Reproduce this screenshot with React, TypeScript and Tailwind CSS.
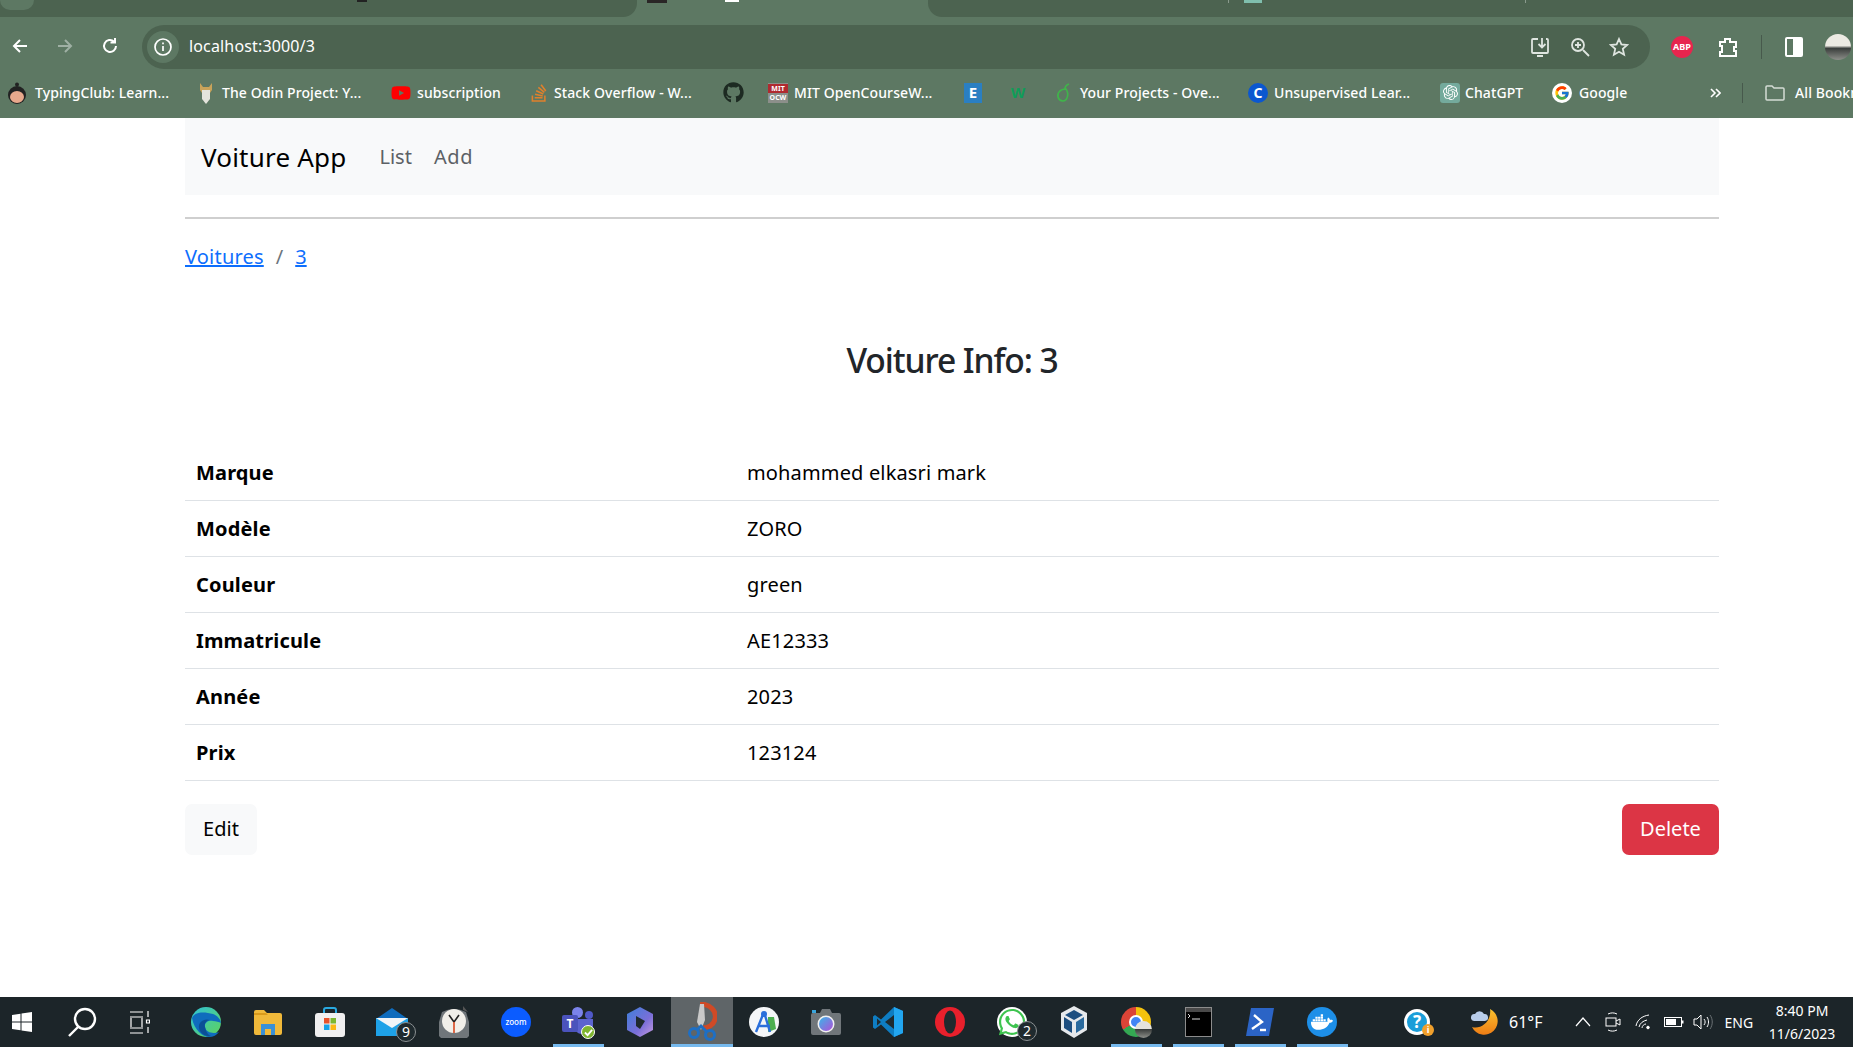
import { FaDocker, FaGithub, FaStackOverflow, FaWhatsapp, FaYoutube } from "react-icons/fa";
import { FcGoogle } from "react-icons/fc";
import { SiOpenai } from "react-icons/si";

const rows = [
  ["Marque", "mohammed elkasri mark"],
  ["Modèle", "ZORO"],
  ["Couleur", "green"],
  ["Immatricule", "AE12333"],
  ["Année", "2023"],
  ["Prix", "123124"],
];

function Bookmark({ width, icon, label, gap = "ml-[5px]" }: { width: string; icon: React.ReactNode; label?: string; gap?: string }) {
  return (
    <div className={`flex shrink-0 items-center ${width}`}>
      <span className="flex h-[22px] w-[22px] shrink-0 items-center justify-center">{icon}</span>
      {label && <span className={`${gap} whitespace-nowrap text-[14px] font-medium tracking-[0.1px] text-white`}>{label}</span>}
    </div>
  );
}

function Cell({ active, open, children }: { active?: boolean; open?: boolean; children: React.ReactNode }) {
  return (
    <div className={`relative flex h-[50px] w-[62px] shrink-0 items-center justify-center ${active ? "bg-[#5f6568]" : ""}`}>
      {children}
      {open && <div className="absolute bottom-0 left-[6px] right-[5px] h-[3px] bg-[#76b9ed]" />}
      {active && <div className="absolute bottom-0 left-0 right-0 h-[3px] bg-[#76b9ed]" />}
    </div>
  );
}

function Badge({ n }: { n: string }) {
  return (
    <span className="absolute left-[20px] top-[14px] flex h-[20px] w-[20px] items-center justify-center rounded-full border border-[#8b9092] bg-[#1f2a2e] text-[14px] leading-none text-white">
      {n}
    </span>
  );
}

function Edge() {
  return (
    <svg width="30" height="30" viewBox="0 0 30 30">
      <defs>
        <linearGradient id="edgeA" x1="0" y1="0" x2="1" y2="1">
          <stop offset="0" stopColor="#2fc2d8" />
          <stop offset="1" stopColor="#5fd35a" />
        </linearGradient>
      </defs>
      <circle cx="15" cy="15" r="15" fill="url(#edgeA)" />
      <path d="M1 11C3 23 12 30 18 30c4 0 8-2 10-5-5 2-13 1-14-5-1-4 3-7 8-6 3 0 6 1 8 2 0-3-3-7-8-9C14 5 4 4 1 11z" fill="#0f6cbd" />
      <path d="M14 20c-1-4 2-7 5-7-6-2-12 2-11 8 1 5 6 9 12 8-3-1-5-4-6-9z" fill="#0b4f96" />
    </svg>
  );
}

function Files() {
  return (
    <svg width="28" height="26" viewBox="0 0 28 26">
      <path d="M0 3a2 2 0 0 1 2-2h8l3 3h13a2 2 0 0 1 2 2v18a2 2 0 0 1-2 2H2a2 2 0 0 1-2-2z" fill="#f0b93a" />
      <path d="M0 4h12l2 2H0z" fill="#d99a1b" />
      <path d="M7 26V15h14v11h-4v-6h-6v6z" fill="#3a90d6" />
    </svg>
  );
}

function Store() {
  return (
    <svg width="30" height="30" viewBox="0 0 30 30">
      <path d="M9 7V3a2 2 0 0 1 2-2h8a2 2 0 0 1 2 2v4" fill="none" stroke="#29a9e0" strokeWidth="2" />
      <rect y="6" width="30" height="24" rx="3" fill="#f0f0f0" />
      <rect x="9" y="11" width="5.5" height="5.5" fill="#e8532b" />
      <rect x="15.5" y="11" width="5.5" height="5.5" fill="#7cb82f" />
      <rect x="9" y="17.5" width="5.5" height="5.5" fill="#17a2e8" />
      <rect x="15.5" y="17.5" width="5.5" height="5.5" fill="#fbb915" />
    </svg>
  );
}

function Mail() {
  return (
    <svg width="32" height="28" viewBox="0 0 32 28">
      <path d="M0 11 16 0l16 11z" fill="#0f6cbd" />
      <rect y="10" width="32" height="18" fill="#1ea2e8" />
      <path d="M0 10h32L16 20z" fill="#f1f5f8" />
    </svg>
  );
}

function Clock() {
  return (
    <svg width="30" height="32" viewBox="0 0 30 32">
      <path d="M24 0l5 6-5-2z" fill="#555" />
      <path d="M3 6a26 26 0 0 1 24 0l3 10v14l-2 2H2l-2-2V16z" fill="#70767a" />
      <circle cx="15" cy="15" r="12" fill="#f1efe9" />
      <path d="M15 16 10 9M15 16l5-7" stroke="#222" strokeWidth="1.6" />
      <path d="M15 16v11" stroke="#d9471f" strokeWidth="1.6" />
    </svg>
  );
}

function Teams() {
  return (
    <div className="relative h-[30px] w-[32px]">
      <div className="absolute left-[10px] top-0 h-[11px] w-[11px] rounded-full bg-[#7b83eb]" />
      <div className="absolute left-[23px] top-[4px] h-[8px] w-[8px] rounded-full bg-[#5059c9]" />
      <div className="absolute left-[12px] top-[12px] h-[15px] w-[19px] rounded-b-[8px] bg-[#5c64cf]" />
      <div className="absolute left-0 top-[8px] flex h-[17px] w-[16px] items-center justify-center rounded-[2px] bg-[#4b53bc] text-[12px] font-bold text-white">T</div>
      <div className="absolute left-[19px] top-[18px] flex h-[14px] w-[14px] items-center justify-center rounded-full border border-white bg-[#7fb52f]">
        <svg width="9" height="9" viewBox="0 0 10 10"><path d="M1 5l3 3 5-6" fill="none" stroke="#fff" strokeWidth="2" /></svg>
      </div>
    </div>
  );
}

function Copilot() {
  return (
    <svg width="28" height="30" viewBox="0 0 28 30">
      <defs>
        <linearGradient id="copA" x1="0" y1="0" x2="1" y2="1">
          <stop offset="0" stopColor="#3d7fd9" />
          <stop offset="0.6" stopColor="#7a6fd8" />
          <stop offset="1" stopColor="#c79be0" />
        </linearGradient>
      </defs>
      <path d="M14 0 27 7v16l-13 7-13-7V7z" fill="url(#copA)" strokeLinejoin="round" />
      <path d="M10 9l9 5-5 8-4-3z" fill="#1f2a2e" />
    </svg>
  );
}

function Snip() {
  return (
    <svg width="30" height="40" viewBox="0 0 30 40">
      <path d="M13 2c10 0 17 7 15 15-1 6-7 9-12 9" fill="none" stroke="#cf4a26" strokeWidth="5" />
      <path d="M13 2l4 0 1 16-4 10-4-8z" fill="#c9c9c9" />
      <circle cx="7" cy="31" r="4.5" fill="none" stroke="#1e6fc4" strokeWidth="3" />
      <circle cx="23" cy="33" r="4.5" fill="none" stroke="#1e6fc4" strokeWidth="3" />
      <path d="M10 28l4-4 6 6" fill="none" stroke="#1e6fc4" strokeWidth="3" />
    </svg>
  );
}

function AndroidStudio() {
  return (
    <svg width="30" height="30" viewBox="0 0 30 30">
      <circle cx="15" cy="15" r="15" fill="#f4f6f8" />
      <path d="M19 10h6l2 12-8 3z" fill="#4caf50" />
      <path d="M15 5 7 25M15 5l6 20M9 19h12" fill="none" stroke="#2a6fdb" strokeWidth="2.4" />
      <circle cx="15" cy="7" r="3" fill="#2a6fdb" />
    </svg>
  );
}

function Camera() {
  return (
    <svg width="30" height="26" viewBox="0 0 30 26">
      <defs>
        <linearGradient id="lens" x1="0" y1="0" x2="1" y2="1">
          <stop offset="0" stopColor="#38b6e8" />
          <stop offset="1" stopColor="#b14fd8" />
        </linearGradient>
      </defs>
      <path d="M9 4l2-4h8l2 4h7a2 2 0 0 1 2 2v18a2 2 0 0 1-2 2H2a2 2 0 0 1-2-2V6a2 2 0 0 1 2-2z" fill="#70767a" />
      <rect x="1" y="1" width="4" height="3" fill="#39a5dc" />
      <circle cx="15" cy="15" r="8.5" fill="#f1f1f1" />
      <circle cx="15" cy="15" r="7" fill="url(#lens)" />
    </svg>
  );
}

function VsCode() {
  return (
    <svg width="30" height="30" viewBox="0 0 30 30">
      <path d="M21 0 30 4v22l-9 4-13-12.5L2 22l-2-1.5V9.5L2 8l6 4.5z" fill="#0e7dc2" />
      <path d="M21 0 30 4v22l-9 4z" fill="#22a6f0" />
      <path d="M21 8 12 15l9 7z" fill="#1f2a2e" />
      <path d="M4 11.5 8 15l-4 3.5z" fill="#1f2a2e" />
    </svg>
  );
}

function Opera() {
  return (
    <svg width="30" height="30" viewBox="0 0 30 30">
      <circle cx="15" cy="15" r="15" fill="#e8202c" />
      <ellipse cx="15" cy="15" rx="6" ry="11.5" fill="#1f2a2e" />
    </svg>
  );
}

function VBox() {
  return (
    <svg width="28" height="34" viewBox="0 0 28 34">
      <path d="M14 1 27 8v17l-13 8-13-8V8z" fill="#e6e9ec" />
      <path d="M14 5 23 10l-9 5-9-5z" fill="#1c4e80" />
      <path d="M4 12l8 5v11l-8-5z" fill="#1c4e80" />
      <path d="M24 12l-8 5v11l8-5z" fill="#2a6a9e" />
    </svg>
  );
}

function Chrome() {
  return (
    <div className="relative h-[30px] w-[30px]">
      <div className="h-[30px] w-[30px] rounded-full bg-[conic-gradient(#f4c20d_0deg_120deg,#34a853_120deg_240deg,#db4437_240deg_360deg)]" />
      <div className="absolute left-[8px] top-[8px] h-[14px] w-[14px] rounded-full border-2 border-white bg-[#4285f4]" />
      <div className="absolute left-[14px] top-[14px] h-[17px] w-[17px] rounded-full bg-[linear-gradient(#e4e2dc_50%,#3c3f3e_50%,#8d8f8a)]" />
    </div>
  );
}

function Terminal() {
  return (
    <div className="h-[30px] w-[27px] border border-[#8c8c8c] bg-black">
      <div className="h-[4px] bg-[#4a4a4a]" />
      <svg width="25" height="12" viewBox="0 0 25 12"><path d="M2 2l2 2-2 2M6 7h8" fill="none" stroke="#ddd" strokeWidth="1" /></svg>
    </div>
  );
}

function PowerShell() {
  return (
    <svg width="30" height="30" viewBox="0 0 30 30">
      <path d="M6 1h23l-5 28H1z" fill="#2b64c6" />
      <path d="M9 8l8 7-10 7" fill="none" stroke="#fff" strokeWidth="2.4" />
      <path d="M15 23h6" stroke="#fff" strokeWidth="2.4" />
    </svg>
  );
}

function Moon() {
  return (
    <svg width="28" height="28" viewBox="0 0 28 28">
      <defs>
        <linearGradient id="moon" x1="0" y1="0" x2="0" y2="1">
          <stop offset="0" stopColor="#f9c12e" />
          <stop offset="1" stopColor="#ee7d15" />
        </linearGradient>
      </defs>
      <path d="M19 1a13.500 13.500 0 1 1-18 18c9 3 20-6 18-18z" fill="url(#moon)" />
      <path d="M3 13a3.500 3.500 0 0 1 1-7 5 5 0 0 1 9 0 3.500 3.500 0 0 1 1 7z" fill="#b8cdea" />
    </svg>
  );
}

export default function App() {
  return (
    <div className="flex h-[1047px] w-[1853px] flex-col overflow-hidden bg-white font-['Noto_Sans','Open_Sans',sans-serif] text-[#212529]">
      {/* browser chrome */}
      <div className="h-[118px] shrink-0 bg-[#5d7863]">
        <div className="flex h-[25px] items-start">
          <div className="relative h-[17px] w-[637px] rounded-br-[14px] bg-[#4c6350]">
            <div className="absolute left-0 top-0 h-[10px] w-[34px] rounded-b-[10px] bg-[#5d7863]" />
            <div className="absolute left-[357px] top-0 h-[2px] w-[10px] bg-[#222]" />
          </div>
          <div className="relative h-[17px] w-[291px]">
            <div className="absolute left-[10px] top-0 h-[3px] w-[20px] bg-[#2a2626]" />
            <div className="absolute left-[88px] top-0 h-[2px] w-[14px] bg-white" />
          </div>
          <div className="relative h-[17px] flex-1 rounded-bl-[14px] bg-[#4c6350]">
            <div className="absolute left-[316px] top-0 h-[3px] w-[18px] bg-[#80bfae]" />
            <div className="absolute left-[300px] top-0 h-[3px] w-px bg-[#8a9a8d]" />
            <div className="absolute left-[597px] top-0 h-[3px] w-px bg-[#8a9a8d]" />
          </div>
        </div>
        <div className="flex h-[44px] items-center">
          <div className="flex w-[142px] items-center pb-[2px] pl-[10px] text-white">
            <svg width="20" height="20" viewBox="0 0 20 20" fill="none" stroke="#fff" strokeWidth="2"><path d="M17 10H4M10 4l-6 6 6 6" /></svg>
            <svg className="ml-[25px]" width="20" height="20" viewBox="0 0 20 20" fill="none" stroke="#9fb0a4" strokeWidth="2"><path d="M3 10h13M10 4l6 6-6 6" /></svg>
            <svg className="ml-[25px]" width="20" height="20" viewBox="0 0 20 20" fill="none" stroke="#fff" strokeWidth="2"><path d="M16 10a6 6 0 1 1-2-4.500M15 2v4.500h-4.500" /></svg>
          </div>
          <div className="flex h-[44px] w-[1508px] items-center rounded-full bg-[#4c6350] pl-[5px]">
            <span className="flex h-[32px] w-[32px] items-center justify-center rounded-full bg-[#5d7863]">
              <svg width="20" height="20" viewBox="0 0 20 20" fill="none" stroke="#fff" strokeWidth="1.7"><circle cx="10" cy="10" r="8" /><path d="M10 9v5M10 5.500v1.700" /></svg>
            </span>
            <span className="ml-[10px] pb-[2px] text-[16px] leading-[22px] tracking-[0.15px] text-white">localhost:3000/3</span>
            <div className="ml-auto flex items-center gap-[19px] pr-[21px]">
              <svg width="22" height="22" viewBox="0 0 22 22" fill="none" stroke="#dfe5e0" strokeWidth="1.8"><path d="M9 3H4a1 1 0 0 0-1 1v12a1 1 0 0 0 1 1h14a1 1 0 0 0 1-1V4a1 1 0 0 0-1-1h-1M8 20h6M13 2v9M9.500 8l3.500 3.500L16.500 8" /></svg>
              <svg width="20" height="20" viewBox="0 0 20 20" fill="none" stroke="#dfe5e0" strokeWidth="1.8"><circle cx="8" cy="8" r="6" /><path d="M13 13l6 6M8 5v6M5 8h6" /></svg>
              <svg width="20" height="20" viewBox="0 0 20 20" fill="none" stroke="#dfe5e0" strokeWidth="1.8"><path d="M10 2l2.400 5.400 5.800.6-4.400 3.900 1.300 5.800L10 14.800l-5.100 2.900 1.300-5.800L1.800 8l5.800-.6z" /></svg>
            </div>
          </div>
          <div className="flex items-center pl-[21px]">
            <span className="flex h-[22px] w-[22px] shrink-0 items-center justify-center rounded-full bg-[#e7254e] text-[9px] font-bold text-white">ABP</span>
            <svg className="ml-[24px] shrink-0" width="22" height="22" viewBox="0 0 22 22" fill="none" stroke="#fff" strokeWidth="2"><path d="M3 6h5V3h5v3h6v5h-2v4h2v5H3v-4h2v-6H3z" /></svg>
            <div className="ml-[22px] h-[24px] w-px shrink-0 bg-[#47594c]" />
            <div className="ml-[23px] flex h-[20px] w-[18px] shrink-0 justify-end rounded-[2px] border-2 border-white"><div className="h-full w-[8px] bg-white" /></div>
            <div className="ml-[22px] h-[26px] w-[26px] shrink-0 rounded-full bg-[linear-gradient(#eceae3_45%,#3a3e3c_55%,#8d8f8a)]" />
          </div>
        </div>
        <div className="flex h-[49px] items-center pb-[2px] pl-[6px]">
          <Bookmark width="w-[189px]" gap="ml-[7px]" label="TypingClub: Learn..." icon={
            <svg width="20" height="22" viewBox="0 0 20 22"><circle cx="10" cy="2.500" r="2" fill="#222" /><circle cx="10" cy="13" r="9" fill="#222" /><ellipse cx="10" cy="15" rx="7" ry="6" fill="#e8a88c" /></svg>
          } />
          <Bookmark width="w-[195px]" label="The Odin Project: Y..." icon={
            <svg width="14" height="22" viewBox="0 0 14 22"><path d="M1 1l3 4h6l3-4v7l-2 3H3L1 8z" fill="#c9a35a" /><path d="M3 8h8v9l-4 5-4-5z" fill="#e4e4dc" /></svg>
          } />
          <Bookmark width="w-[138px]" label="subscription" icon={<FaYoutube className="text-[20px] text-[#f00]" />} />
          <Bookmark width="w-[194px]" gap="ml-[4px]" label="Stack Overflow - W..." icon={<FaStackOverflow className="text-[20px] text-[#e0802c]" />} />
          <Bookmark width="w-[45px]" icon={<FaGithub className="text-[21px] text-[#1d2a22]" />} />
          <Bookmark width="w-[195px]" label="MIT OpenCourseW..." icon={
            <span className="flex h-[20px] w-[20px] flex-col items-center justify-center bg-[#8c8f8a] text-[7px] font-bold leading-[9px] text-white"><span className="w-full bg-[#b02a30] text-center">MIT</span><span>OCW</span></span>
          } />
          <Bookmark width="w-[45px]" icon={<span className="flex h-[20px] w-[18px] items-center justify-center bg-[#2a7fc2] text-[15px] font-bold text-white">E</span>} />
          <Bookmark width="w-[45px]" icon={<span className="text-[15px] font-bold text-[#0f9d58]">W</span>} />
          <Bookmark width="w-[195px]" gap="ml-[6px]" label="Your Projects - Ove..." icon={
            <svg width="16" height="20" viewBox="0 0 16 20" fill="none" stroke="#3fb54a" strokeWidth="1.6"><path d="M11 6c-6 0-9 4-8 8s7 6 9 1 0-7-1-9zM10 6c0-2 1-4 4-5" /></svg>
          } />
          <Bookmark width="w-[192px]" label="Unsupervised Lear..." icon={<span className="flex h-[20px] w-[20px] items-center justify-center rounded-full bg-[#0b57d0] text-[14px] font-bold text-white">C</span>} />
          <Bookmark width="w-[112px]" gap="ml-[4px]" label="ChatGPT" icon={<span className="flex h-[20px] w-[20px] items-center justify-center rounded-[3px] bg-[#74aa9c]"><SiOpenai className="text-[15px] text-white" /></span>} />
          <Bookmark width="w-[158px]" gap="ml-[6px]" label="Google" icon={<span className="flex h-[20px] w-[20px] items-center justify-center rounded-full bg-white"><FcGoogle className="text-[16px]" /></span>} />
          <svg className="shrink-0" width="12" height="12" viewBox="0 0 12 12" fill="none" stroke="#fff" strokeWidth="1.6"><path d="M2 2l4 4-4 4M7 2l4 4-4 4" /></svg>
          <div className="ml-[21px] h-[20px] w-px shrink-0 bg-[#47594c]" />
          <svg className="ml-[22px] shrink-0" width="20" height="18" viewBox="0 0 20 18" fill="none" stroke="#d4dbd5" strokeWidth="1.5"><path d="M1 3a1 1 0 0 1 1-1h5l2 2h9a1 1 0 0 1 1 1v10a1 1 0 0 1-1 1H2a1 1 0 0 1-1-1z" /></svg>
          <span className="ml-[10px] whitespace-nowrap text-[14px] font-medium tracking-[0.1px] text-white">All Bookmarks</span>
        </div>
      </div>

      {/* page */}
      <main className="ml-[185px] h-[879px] w-[1534px] shrink-0">
        <nav className="flex h-[77px] items-center bg-[#f8f9fa] pl-[16px] pt-[1px]">
          <a className="text-[26px] tracking-[0.2px] text-black">Voiture App</a>
          <a className="ml-[33px] text-[20px] text-[#5c6166]">List</a>
          <a className="ml-[22px] text-[20px] tracking-[0.6px] text-[#5c6166]">Add</a>
        </nav>
        <div className="mt-[22px] h-[2px] bg-[#cfcfcf]" />
        <div className="mt-[23px] flex h-[29px] items-center text-[20px]">
          <a className="tracking-[0.2px] text-[#0d6efd] underline">Voitures</a>
          <span className="mx-[12px] text-[#6c757d]">/</span>
          <a className="text-[#0d6efd] underline">3</a>
        </div>
        <h3 className="mt-[69px] text-center text-[33.6px] font-medium leading-[40px] tracking-[-1.1px]">Voiture Info: 3</h3>
        <table className="mt-[64px] w-full border-collapse text-[20px] tracking-[0.15px]">
          <tbody>
            {rows.map(([label, value]) => (
              <tr key={label} className="h-[56px] border-b border-[#dee2e6]">
                <th className="w-[550px] pl-[11px] pt-[2px] text-left font-bold text-black">{label}</th>
                <td className="pl-[12px] pt-[2px] text-black">{value}</td>
              </tr>
            ))}
          </tbody>
        </table>
        <div className="mt-[23px] flex justify-between">
          <button className="h-[51px] w-[72px] rounded-[7px] bg-[#f8f9fa] text-[20px] text-black">Edit</button>
          <button className="h-[51px] w-[97px] rounded-[7px] bg-[#dc3545] text-[20px] text-white">Delete</button>
        </div>
      </main>

      {/* taskbar */}
      <footer className="flex h-[50px] shrink-0 items-center bg-[#1c2529] text-white">
        <div className="flex w-[175px] items-center pl-[12px]">
          <svg className="shrink-0" width="20" height="20" viewBox="0 0 20 20" fill="#fff"><path d="M0 3l8.500-1.200V9.500H0zM9.500 1.600 20 0v9.500H9.500zM0 10.500h8.500v7.700L0 17zM9.500 10.500H20V20L9.500 18.400z" /></svg>
          <svg className="ml-[35px] shrink-0" width="30" height="30" viewBox="0 0 30 30" fill="none" stroke="#fff" strokeWidth="2.400"><circle cx="18" cy="12" r="10" /><path d="M11 20l-9 9" /></svg>
          <svg className="ml-[33px] shrink-0" width="20" height="24" viewBox="0 0 20 24" fill="none" stroke="#fff" strokeWidth="1.200"><path d="M0 2h13M0 7h13M0 18h13M0 23h13M1 8v9M12 8v9M18 1v6M18 17v6M16.500 10h3v3h-3z" /></svg>
        </div>
        <Cell><Edge /></Cell>
        <Cell><Files /></Cell>
        <Cell><Store /></Cell>
        <Cell><div className="relative"><Mail /><Badge n="9" /></div></Cell>
        <Cell><Clock /></Cell>
        <Cell><span className="flex h-[30px] w-[30px] items-center justify-center rounded-full bg-[#0b5cff] text-[8px] font-medium text-white">zoom</span></Cell>
        <Cell open><Teams /></Cell>
        <Cell><Copilot /></Cell>
        <Cell active><Snip /></Cell>
        <Cell><AndroidStudio /></Cell>
        <Cell><Camera /></Cell>
        <Cell><VsCode /></Cell>
        <Cell><Opera /></Cell>
        <Cell>
          <div className="relative">
            <span className="flex h-[30px] w-[30px] items-center justify-center rounded-full bg-white"><FaWhatsapp className="text-[30px] text-[#3ec44f]" /></span>
            <Badge n="2" />
          </div>
        </Cell>
        <Cell><VBox /></Cell>
        <Cell open><Chrome /></Cell>
        <Cell open><Terminal /></Cell>
        <Cell open><PowerShell /></Cell>
        <Cell open>
          <span className="flex h-[30px] w-[30px] items-center justify-center rounded-full bg-[#1d8fe8]"><FaDocker className="text-[22px] text-white" /></span>
        </Cell>
        <div className="relative ml-[51px] flex h-[26px] w-[26px] shrink-0 items-center justify-center rounded-full border-[3px] border-white bg-[#1a9ed9] text-[17px] font-bold">
          ?
          <span className="absolute left-[15px] top-[12px] flex h-[12px] w-[12px] items-center justify-center rounded-full bg-[#f0a02c] text-[9px]">i</span>
        </div>
        <div className="ml-[41px]"><Moon /></div>
        <span className="ml-[10px] text-[16px]">61°F</span>
        <svg className="ml-[33px]" width="16" height="10" viewBox="0 0 16 10" fill="none" stroke="#fff" strokeWidth="1.200"><path d="M1 9l7-8 7 8" /></svg>
        <svg className="ml-[14px]" width="16" height="20" viewBox="0 0 16 20" fill="none" stroke="#fff" strokeWidth="1"><path d="M3 2c3-1.500 6-1.500 9 0M3 18c3 1.500 6 1.500 9 0" /><rect x="1" y="6" width="10" height="8" /><path d="M11 9l4-2v6l-4-2" /></svg>
        <svg className="ml-[14px]" width="16" height="16" viewBox="0 0 16 16" fill="none" stroke="#fff" strokeWidth="1"><path d="M1 12C2 6 7 2 14 1M4 13c1-4 4-6 8-7M7 14c0-2 2-4 4-4" /><circle cx="13" cy="13.500" r="1.300" fill="#fff" /></svg>
        <svg className="ml-[13px]" width="20" height="12" viewBox="0 0 20 12" fill="none"><rect x="0.500" y="1.500" width="17" height="9" stroke="#fff" /><rect x="2" y="3" width="10" height="6" fill="#fff" /><rect x="18" y="4.500" width="1.500" height="3" fill="#fff" /></svg>
        <svg className="ml-[9px]" width="20" height="16" viewBox="0 0 20 16" fill="none" stroke="#fff" strokeWidth="1"><path d="M1 5h3l4-4v14l-4-4H1zM11 5c1.500 2 1.500 4 0 6M14 3c2 3 2 7 0 10" /><path d="M17 1c3 4 3 10 0 14" stroke="#6b7275" /></svg>
        <span className="ml-[11px] text-[14px]">ENG</span>
        <div className="ml-[15px] flex w-[68px] flex-col items-center text-[14px] leading-[23px]">
          <span className="whitespace-nowrap">8:40 PM</span>
          <span className="whitespace-nowrap">11/6/2023</span>
        </div>
      </footer>
    </div>
  );
}
